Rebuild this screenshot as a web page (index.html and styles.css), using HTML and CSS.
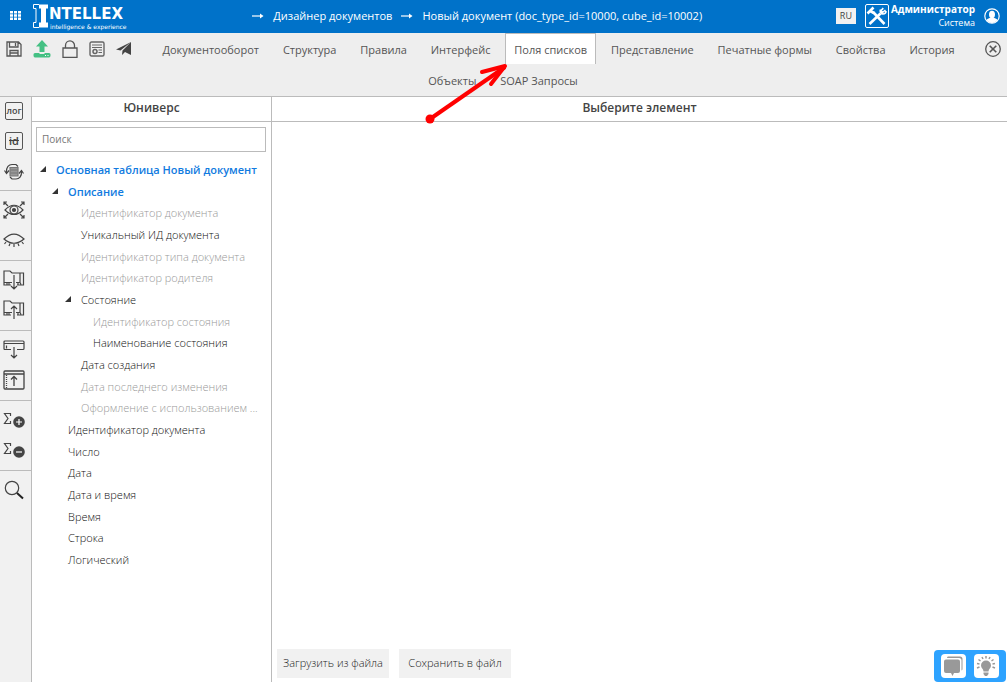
FILE: index.html
```html
<!DOCTYPE html>
<html lang="ru">
<head>
<meta charset="utf-8">
<title>Дизайнер документов</title>
<link rel="stylesheet" href="styles.css">
</head>
<body>
<header class="topbar">
  <button class="icon-btn apps" aria-label="Меню">
    <svg width="11" height="9" viewBox="0 0 11 9" fill="#fff"><path d="M0 0h3v2.4H0zM4 0h3v2.4H4zM8 0h3v2.4H8zM0 3.3h3v2.4H0zM4 3.3h3v2.4H4zM8 3.3h3v2.4H8zM0 6.6h3V9H0zM4 6.6h3V9H4zM8 6.6h3V9H8z"/></svg>
  </button>
  <a class="logo" href="#" aria-label="Intellex">
    <svg class="logo-mark" width="16" height="24" viewBox="0 0 16 24"><path d="M6 .5h9v4h-2v14h2v5H6v-5h2v-14H6z" fill="#fff"/><path d="M6 .5H.5v4H3v14H.5v5H6" fill="none" stroke="#fff"/></svg>
    <span class="logo-text"><span class="logo-name">NTELLEX</span><span class="logo-tag">intelligence &amp; experience</span></span>
  </a>
  <nav class="crumbs" aria-label="Путь">
    <svg width="12" height="6" viewBox="0 0 12 6"><path d="M0 3h10" stroke="#fff" stroke-width="1.2"/><path d="M8 .5 11.5 3 8 5.500z" fill="#fff"/></svg>
    <a href="#">Дизайнер документов</a>
    <svg width="12" height="6" viewBox="0 0 12 6"><path d="M0 3h10" stroke="#fff" stroke-width="1.2"/><path d="M8 .5 11.5 3 8 5.500z" fill="#fff"/></svg>
    <a href="#">Новый документ (doc_type_id=10000, cube_id=10002)</a>
  </nav>
  <div class="account">
    <button class="lang">RU</button>
    <button class="icon-btn" aria-label="Настройки">
      <svg width="24" height="24" viewBox="0 0 24 24" fill="none" stroke="#fff"><rect x=".5" y=".5" width="23" height="23" rx="1.500"/><path d="M8 8l11.500 12" stroke-width="2.600"/><path d="M15.500 9.500 4.500 20" stroke-width="2.600"/><path d="M2.500 9.500l6-6M5 7l4 2" stroke-width="2.600"/><path d="M20.500 6l-3 2.500-1.800-1.600 2.600-2.800M15.500 5.500c-1 2 .5 4.500 2.500 4.500s3-1 3-3" stroke-width="1.600"/></svg>
    </button>
    <div class="user"><strong>Администратор</strong><span>Система</span></div>
    <button class="icon-btn" aria-label="Профиль">
      <svg width="16" height="16" viewBox="0 0 16 16"><circle cx="8" cy="8" r="7.200" fill="none" stroke="#fff" stroke-width="1.200"/><ellipse cx="8" cy="6.500" rx="3" ry="3.800" fill="#fff"/><path d="M2.500 12c1-1.500 3-1.500 4-2.500h3c1 1 3 1 4 2.500-1.500 2-3.500 3-5.500 3s-4-1-5.500-3z" fill="#fff"/></svg>
    </button>
  </div>
</header>

<div class="toolbar">
  <div class="tools">
    <button class="icon-btn" aria-label="Сохранить"><svg width="16" height="16" viewBox="0 0 16 16" fill="none" stroke="#555" stroke-width="1.300"><path d="M1 1h11.500L15 3.500V15H1zM3.500 1v5h8.500V1M4 15V9.500h8V15M4 12h8"/><path d="M9.500 2v3"/></svg></button>
    <button class="icon-btn" aria-label="Выгрузить"><svg width="18" height="18" viewBox="0 0 18 18" fill="#44c083"><path d="M9 0l6 6.500h-3.500V12h-5V6.500H3z"/><path d="M2 13h4l1 1h4l1-1h4q1.500 0 1.500 1.500v1q0 2-1.500 2H2q-1.500 0-1.500-2v-1Q.5 13 2 13z"/><path d="M12 15.500h1M14.500 15.500h1" stroke="#fff"/></svg></button>
    <button class="icon-btn" aria-label="Заблокировать"><svg width="16" height="18" viewBox="0 0 16 18" fill="none" stroke="#555" stroke-width="1.300"><path d="M1 8h14v9.300H1zM3.500 8V5.500a4.500 4.700 0 0 1 9 0V8"/></svg></button>
    <button class="icon-btn" aria-label="Параметры"><svg width="16" height="16" viewBox="0 0 16 16" fill="none" stroke="#666"><rect x="1" y="1" width="14" height="14" rx="1.500" stroke-width="1.400"/><path d="M3 4h10M3 6.500h10M9.500 9H13M9.500 11.500H13"/><circle cx="6" cy="10.500" r="2" stroke-width="1.500"/></svg></button>
    <button class="icon-btn" aria-label="Отправить"><svg width="16" height="15" viewBox="0 0 16 15" fill="#444"><path d="M15 1 0 8.500l4.500 1zM15 1 6.500 9.500 6 14l3-3 6 3z"/></svg></button>
  </div>
  <button class="icon-btn close" aria-label="Закрыть"><svg width="16" height="16" viewBox="0 0 16 16" fill="none" stroke="#555" stroke-width="1.300"><circle cx="8" cy="8" r="7.300"/><path d="M4.700 4.700l6.600 6.600M11.300 4.700l-6.600 6.600" stroke-width="1.600"/></svg></button>
  <nav class="tabs">
    <a href="#">Документооборот</a>
    <a href="#">Структура</a>
    <a href="#">Правила</a>
    <a href="#">Интерфейс</a>
    <a href="#" class="active" aria-current="page">Поля списков</a>
    <a href="#">Представление</a>
    <a href="#">Печатные формы</a>
    <a href="#">Свойства</a>
    <a href="#">История</a>
    <a href="#">Объекты</a>
    <a href="#">SOAP Запросы</a>
  </nav>
</div>

<main class="workspace">
  <aside class="rail">
    <div class="rail-group">
      <button class="icon-btn boxed">лог</button>
      <button class="icon-btn boxed id">id</button>
      <button class="icon-btn" aria-label="Обновить"><svg width="20" height="18" viewBox="0 0 20 18" fill="none" stroke="#444" stroke-width="1.200"><path d="M6 4.500h8V13H6z" fill="#999" stroke="#777"/><path d="M6.500 7h7M6.500 10h7" stroke="#777"/><path d="M2.500 9.500C2 4 5 1.500 8 1.500h4l2 2M17.500 8c.5 5.500-2.500 8-5.500 8H8l-2-2"/><path d="M.5 7.500l2 3 2.500-3M15 10.500l2.500-3 2 3"/></svg></button>
    </div>
    <div class="rail-group">
      <button class="icon-btn" aria-label="Показать"><svg width="22" height="18" viewBox="0 0 22 18" fill="none" stroke="#444" stroke-width="1.200"><path d="M2 9q9-9.500 18 0-9 9-18 0z"/><circle cx="11" cy="9" r="4"/><circle cx="11" cy="9" r="1.500" fill="#444"/><path d="M1 4V1h3M1 1l4 4M18 1h3v3M21 1l-4 4M1 14v3h3M1 17l4-4M18 17h3v-3M21 17l-4-4"/></svg></button>
      <button class="icon-btn" aria-label="Скрыть"><svg width="22" height="16" viewBox="0 0 22 16" fill="none" stroke="#444" stroke-width="1.200"><path d="M1 7q10-10 20 0-10 8.500-20 0zM3 10l-1.500 2M7 11.500 6 14M11 12v3M15 11.500l1 2.500M19 10l1.500 2"/></svg></button>
    </div>
    <div class="rail-group">
      <button class="icon-btn" aria-label="Развернуть папку"><svg width="22" height="20" viewBox="0 0 22 20" fill="none" stroke="#444" stroke-width="1.200"><path d="M9 12.500H1V1h6l2 2h8v9.500h-4M1 12.500V15h7M17 3h3.500v12H14M17 12.500l1 2M4 13v2M6 13v2M15 13v2M11 5v14M8 16l3 3 3-3"/></svg></button>
      <button class="icon-btn" aria-label="Свернуть папку"><svg width="22" height="20" viewBox="0 0 22 20" fill="none" stroke="#444" stroke-width="1.200"><path d="M9 12.500H1V1h6l2 2h8v9.500h-4M1 12.500V15h7M17 3h3.500v12H14M17 12.500l1 2M4 13v2M6 13v2M15 13v2M11 19V6M8 9l3-3 3 3"/></svg></button>
    </div>
    <div class="rail-group">
      <button class="icon-btn" aria-label="Развернуть"><svg width="22" height="20" viewBox="0 0 22 20" fill="none" stroke="#444" stroke-width="1.200"><path d="M8 9.500H2q-1 0-1-1V2q0-1 1-1h18q1 0 1 1v6.500q0 1-1 1h-6M1 3.500h20M3.500 5.500v3M11 7v11M8 15l3 3 3-3"/></svg></button>
      <button class="icon-btn" aria-label="Свернуть"><svg width="22" height="20" viewBox="0 0 22 20" fill="none" stroke="#444" stroke-width="1.300"><rect x="1" y="1" width="20" height="18" rx="1"/><path d="M1 4h20M11 16V6.500M8 9.500l3-3 3 3"/><path d="M3.500 5v13" stroke-dasharray="1 1"/></svg></button>
    </div>
    <div class="rail-group">
      <button class="icon-btn" aria-label="Добавить сумму"><svg width="22" height="16" viewBox="0 0 22 16" fill="none" stroke="#444"><path d="M7.500 4V1.500h-6l3.500 5-3.500 5h6V9" stroke-width="1.200"/><circle cx="16" cy="10" r="5.800" fill="#444" stroke="none"/><path d="M13 10h6M16 7v6" stroke="#fff" stroke-width="1.200"/></svg></button>
      <button class="icon-btn" aria-label="Убрать сумму"><svg width="22" height="16" viewBox="0 0 22 16" fill="none" stroke="#444"><path d="M7.500 4V1.500h-6l3.500 5-3.500 5h6V9" stroke-width="1.200"/><circle cx="16" cy="10" r="5.800" fill="#444" stroke="none"/><path d="M13 10h6" stroke="#fff" stroke-width="1.200"/></svg></button>
    </div>
    <div class="rail-group">
      <button class="icon-btn" aria-label="Поиск"><svg width="20" height="20" viewBox="0 0 20 20" fill="none" stroke="#444"><circle cx="8" cy="8" r="6.700" stroke-width="1.200"/><path d="M13 13l6 5.500" stroke="#222" stroke-width="2"/></svg></button>
    </div>
  </aside>

  <section class="universe">
    <h2 class="panel-title">Юниверс</h2>
    <div class="search"><input type="search" placeholder="Поиск" aria-label="Поиск"></div>
    <ul class="tree">
      <li class="l0 branch group">Основная таблица Новый документ</li>
      <li class="l1 branch group">Описание</li>
      <li class="l2 off">Идентификатор документа</li>
      <li class="l2">Уникальный ИД документа</li>
      <li class="l2 off">Идентификатор типа документа</li>
      <li class="l2 off">Идентификатор родителя</li>
      <li class="l2 branch">Состояние</li>
      <li class="l3 off">Идентификатор состояния</li>
      <li class="l3">Наименование состояния</li>
      <li class="l2">Дата создания</li>
      <li class="l2 off">Дата последнего изменения</li>
      <li class="l2 off">Оформление с использованием ...</li>
      <li class="l1">Идентификатор документа</li>
      <li class="l1">Число</li>
      <li class="l1">Дата</li>
      <li class="l1">Дата и время</li>
      <li class="l1">Время</li>
      <li class="l1">Строка</li>
      <li class="l1">Логический</li>
    </ul>
  </section>

  <section class="details">
    <h2 class="panel-title">Выберите элемент</h2>
    <div class="details-body"></div>
    <div class="actions">
      <button>Загрузить из файла</button>
      <button>Сохранить в файл</button>
    </div>
  </section>
</main>

<div class="assist">
  <button aria-label="Сообщения"><svg width="22" height="22" viewBox="0 0 22 22" fill="#999"><path d="M6 1.500h12q2.500 0 2.500 2.500V14q0 1-1 1.500V5.500q0-2.500-2.500-2.500H5Q5 1.500 6 1.500z"/><path d="M4 4.500h12q2 0 2 2V16q0 2-2 2h-4L10.500 21 9 18H4q-2 0-2-2V6.500q0-2 2-2z"/></svg></button>
  <button aria-label="Подсказки"><svg width="22" height="22" viewBox="0 0 22 22" fill="#999"><path d="M11 5.500a5 5 0 0 1 5 5c0 2.500-2.500 3.500-2.500 6h-5c0-2.500-2.500-3.500-2.500-6a5 5 0 0 1 5-5zM8.500 17.500h5v1.500l-1.500 2h-2l-1.500-2z"/><path d="M11 1v2.500M7 2l1 2M15 2l-1 2M3.500 4.500l2 1.500M18.500 4.500l-2 1.500M2 8.500l2.500.5M20 8.500l-2.500.5M2 13l2.500-1M20 13l-2.500-1" stroke="#999" stroke-width="1.500"/></svg></button>
</div>

<svg class="pointer" width="84" height="62" viewBox="0 0 84 62" fill="none" stroke="#f00"><path d="M5 56 80 4" stroke-width="4"/><path d="M57 9 80 3 66 21" stroke-width="4" stroke-linecap="round" stroke-linejoin="round"/><circle cx="5" cy="56" r="4.500" fill="#f00" stroke="none"/></svg>
</body>
</html>
```
FILE: styles.css
```css
* { box-sizing: border-box; }
body {
  margin: 0;
  min-height: 100vh;
  display: flex;
  flex-direction: column;
  position: relative;
  background: #fff;
  color: #444;
  font: 11px/16px "Open Sans", sans-serif;
}
button { font: inherit; color: inherit; border: 0; padding: 0; cursor: pointer; }
a { color: inherit; text-decoration: none; }
svg { display: block; }
.icon-btn { display: flex; align-items: center; justify-content: center; background: none; }

.topbar {
  display: flex;
  align-items: center;
  height: 33px;
  padding: 0 7px 2px 10px;
  background: #0072c9;
  color: #fff;
}
.logo { display: flex; align-items: center; margin-left: 12px; }
.logo-text { display: flex; flex-direction: column; padding-top: 4px; }
.logo-name { font: bold 15px/18px "DejaVu Sans", sans-serif; }
.logo-tag { margin-left: 1px; font: 6px/7px "DejaVu Sans", sans-serif; }
.crumbs {
  flex: 1;
  display: flex;
  align-items: center;
  justify-content: center;
  gap: 9px;
  padding-right: 8px;
  font-weight: 500;
}
.account { display: flex; align-items: center; }
.lang { height: 16px; width: 20px; margin-right: 9px; background: #f1f1f1; color: #444; font-size: 9px; line-height: 14px; }
.user { display: flex; flex-direction: column; align-items: flex-end; margin: 0 9px 0 2px; font-size: 10px; line-height: 13px; }
.user span { font-weight: 500; font-size: 9px; }

.toolbar { padding-bottom: 1px; background: #eee; border-bottom: 1px solid #bbb; }
.tools { float: left; display: flex; gap: 11px; height: 31px; padding-left: 6px; width: 140px; }
.close { float: right; height: 31px; width: 29px; }
.tabs { text-align: center; color: #555; }
.tabs a { display: inline-block; vertical-align: top; margin: 0 2px 0 1px; padding: 8px 8px 6px; border: 1px solid transparent; border-width: 1px 1px 0; }
.tabs .active { background: #fff; border-color: #bbb; }

.workspace { flex: 1; display: flex; }
.rail { width: 32px; background: #f1f1f1; border-right: 1px solid #bbb; }
.rail-group { display: flex; flex-direction: column; align-items: center; padding: 4px 3px 5px 0; border-bottom: 1px solid #bbb; }
.rail-group:first-child { padding-top: 0; padding-bottom: 3px; }
.rail-group:last-child { border: 0; }
.rail-group .icon-btn { height: 30px; width: 100%; }
.rail-group .boxed { width: 18px; height: 18px; margin: 5px 0 7px; border: 1px solid #555; border-radius: 2px; font-size: 9px; font-weight: 600; line-height: 12px; }
.rail-group .id { font-size: 11px; text-decoration: line-through; }

.universe { width: 240px; border-right: 1px solid #bbb; }
.panel-title { margin: 0; padding: 3px 0 5px; border-bottom: 1px solid #bbb; font-size: 12px; line-height: 16px; font-weight: 600; text-align: center; }
.search { padding: 5px 5px 4px 4px; }
.search input { display: block; width: 100%; height: 25px; padding: 0 5px 2px; border: 1px solid #bbb; border-radius: 0; background: #fff; font: 10px/16px "Open Sans", sans-serif; color: #444; }
.search input::placeholder { color: #777; }
.tree { display: grid; grid-auto-rows: 1fr; align-items: center; min-height: 412px; margin: 3px 0 0; padding: 0; list-style: none; white-space: nowrap; font-weight: 300; color: #111; }
.l0 { padding-left: 24px; }
.l1 { padding-left: 36px; }
.l2 { padding-left: 49px; }
.l3 { padding-left: 61px; }
.group { color: #117be0; font-weight: 600; }
.off { color: #999; }
.branch::before { content: ""; float: left; margin: 4px 0 0 -16px; border-left: 6px solid transparent; border-bottom: 6px solid #333; }

.details { flex: 1; display: flex; flex-direction: column; }
.details-body { flex: 1; }
.actions { display: flex; gap: 10px; padding: 0 5px 4px; }
.actions button { width: 112px; height: 29px; padding-bottom: 1px; background: #f1f1f1; color: #222; font-weight: 300; }

.assist { position: fixed; right: 1px; bottom: 0; display: flex; gap: 8px; padding: 4px 7px; border-radius: 4px; background: #2ea3ff; }
.assist button { width: 25px; height: 24px; padding: 1px; border-radius: 4px; background: #fff; }
.pointer { position: absolute; left: 425px; top: 63px; }
```
